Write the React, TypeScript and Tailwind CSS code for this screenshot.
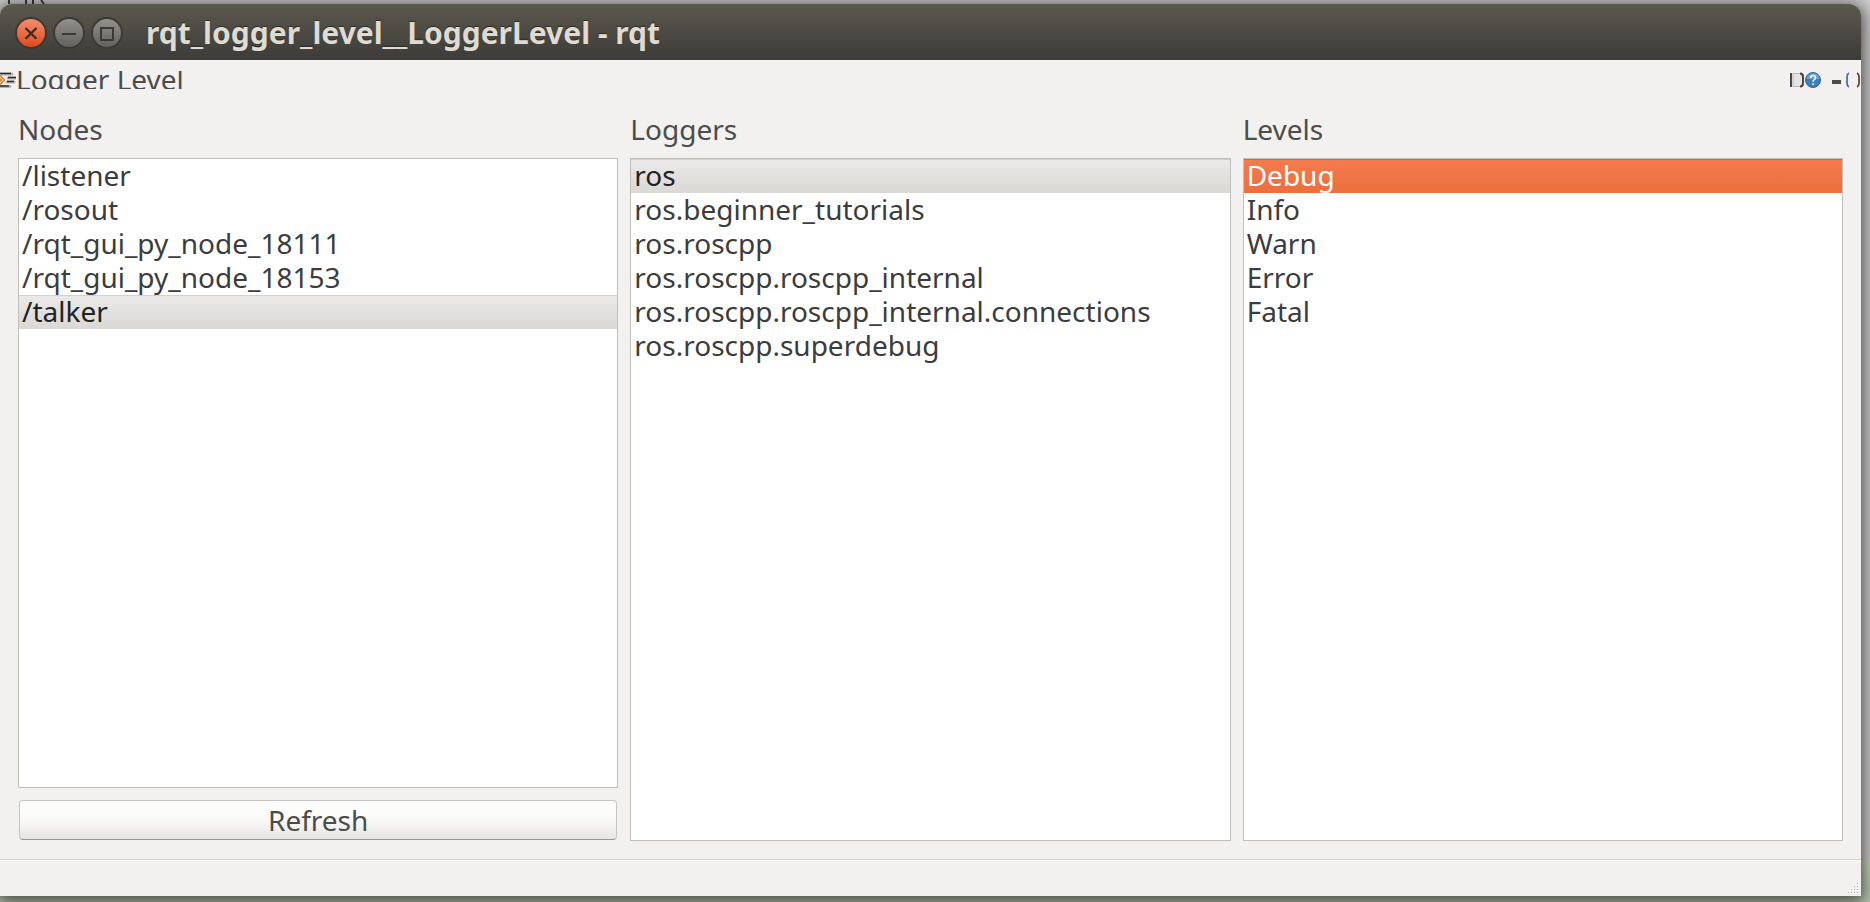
import { useState } from "react";

type PanelProps = {
  title: string;
  items: string[];
  initial: string;
  accent?: boolean;
  children?: React.ReactNode;
};

function ListPanel({ title, items, initial, accent = false, children }: PanelProps) {
  const [selected, setSelected] = useState(initial);
  const active = accent
    ? "bg-linear-to-b from-[#f47c4f] to-[#ec6f3d] text-white shadow-[inset_0_1px_#d96a3c]"
    : "bg-linear-to-b from-[#ebeae9] to-[#dad8d5] text-[#222222] shadow-[inset_0_1px_#d2d1cf]";
  return (
    <section aria-label={title} className="flex min-w-0 flex-1 flex-col">
      <h2 className="pb-3 leading-[34px]">{title}</h2>
      <ul className="flex-1 overflow-hidden border border-[#c0bfbc] bg-white text-[#3c3c3c]">
        {items.map((item) => (
          <li key={item}>
            <button
              type="button"
              aria-pressed={item === selected}
              onClick={() => setSelected(item)}
              className={`block w-full px-[3px] pb-[2px] text-left leading-8 whitespace-nowrap ${
                item === selected ? active : ""
              }`}
            >
              {item}
            </button>
          </li>
        ))}
      </ul>
      {children}
    </section>
  );
}

function WindowControls() {
  return (
    <div className="flex gap-[6px]">
      <button
        type="button"
        aria-label="Close"
        className="size-8 rounded-full border-2 border-[#3b3935] bg-linear-to-b from-[#f68d6c] to-[#dd4814]"
      >
        <svg viewBox="0 0 28 28" className="size-7" fill="none" stroke="#3b2a22" strokeWidth="2.4">
          <path d="M8.500 10l11 11M19.500 10l-11 11" stroke="#f6906e" strokeWidth="1.500" />
          <path d="M8.500 9l11 11M19.500 9l-11 11" />
        </svg>
      </button>
      <button
        type="button"
        aria-label="Minimize"
        className="size-8 rounded-full border-2 border-[#3b3935] bg-linear-to-b from-[#92918b] to-[#62615b]"
      >
        <svg viewBox="0 0 28 28" className="size-7" fill="none" stroke="#3b3935" strokeWidth="2">
          <path d="M7 15h14" />
        </svg>
      </button>
      <button
        type="button"
        aria-label="Maximize"
        className="size-8 rounded-full border-2 border-[#3b3935] bg-linear-to-b from-[#92918b] to-[#62615b]"
      >
        <svg viewBox="0 0 28 28" className="size-7" fill="none" stroke="#3b3935" strokeWidth="2">
          <rect x="8" y="9" width="12" height="12" />
        </svg>
      </button>
    </div>
  );
}

function DockIcon() {
  return (
    <svg viewBox="0 0 16 16" className="size-4 shrink-0" fill="none" aria-hidden="true">
      <path d="M0 2h12M8 6h8M7 10h7M0 14.500h10" stroke="#b5b5b5" strokeWidth="3" strokeLinecap="round" />
      <path d="M0 1.500h11M8 5.500h8M7 9.500h7M0 14h9" stroke="#2f2f2f" strokeWidth="1.600" />
      <path d="M0 3.500L4.500 8 0 12.500M0 6.500L1.500 8 0 9.500" stroke="#e07b1a" strokeWidth="1.500" />
    </svg>
  );
}

function DockButtons() {
  return (
    <div className="flex h-4 items-center">
      <button type="button" aria-label="Configuration">
        <svg viewBox="0 0 15 16" className="h-4 w-[15px]">
          <path d="M3 1.500h7l3 4v9H3z" fill="#e6e4e1" stroke="#b9b7b3" />
          <path d="M1 1v14" stroke="#45474f" strokeWidth="2" fill="none" />
          <path d="M10 1.500q3 0 3 3v7q0 3-3 3" stroke="#4d4640" strokeWidth="2" fill="none" />
        </svg>
      </button>
      <button type="button" aria-label="Help">
        <svg viewBox="0 0 16 16" className="size-4">
          <circle cx="8" cy="8" r="7.500" fill="#3d7fb9" stroke="#2c6397" />
          <path d="M1.500 7a6.500 6 0 0 1 13 0z" fill="#6a9dca" />
          <path d="M5.600 6.200q0-2.600 2.500-2.600t2.500 2.200q0 1.200-1.300 1.900T8.100 9.800M8.100 11.300v1.700" stroke="#fff" strokeWidth="1.500" fill="none" />
        </svg>
      </button>
      <button type="button" aria-label="Minimize panel" className="ml-[11px]">
        <svg viewBox="0 0 10 16" className="h-4 w-[10px]">
          <path d="M0 10h9" stroke="#4a4a4a" strokeWidth="4" />
        </svg>
      </button>
      <button type="button" aria-label="Close panel" className="ml-1">
        <svg viewBox="0 0 14 16" className="h-4 w-[14px]" fill="none" strokeWidth="1.800">
          <path d="M3 1q-2 1-2 4v6q0 3 2 4" stroke="#4d6f9a" />
          <path d="M11 1q2 1 2 4v6q0 3-2 4" stroke="#6a4a30" />
        </svg>
      </button>
    </div>
  );
}

const gripDots = [
  [9, 0], [6, 3], [9, 3], [3, 6], [6, 6], [9, 6], [0, 9], [3, 9], [6, 9], [9, 9],
];

export default function App() {
  return (
    <div className="relative flex min-h-screen flex-col bg-linear-to-b from-[#cdcdcd] from-95% via-[#c5d6b4] via-96% to-[#b9c4b0] pt-1 pr-[9px] pb-[6px] font-['Noto_Sans',sans-serif] text-[28px] text-[#4c4c4c]">
      <main className="flex flex-1 flex-col rounded-t-xl bg-[#f2f1ef] shadow-[0_3px_16px_3px_#000000a0]">
        <header className="flex h-14 items-center gap-[23px] rounded-t-xl border-t border-[#5a574c] bg-linear-to-b from-[#5b584d] to-[#3d3c38] pl-[15px]">
          <WindowControls />
          <h1 className="truncate text-[30px] font-bold text-[#dfdbd2] [text-shadow:0_-1px_1px_#2c2b28]">
            rqt_logger_level__LoggerLevel - rqt
          </h1>
        </header>
        <div className="flex h-10 items-center justify-between pr-px">
          <div className="flex items-center">
            <DockIcon />
            <span className="h-[18px] overflow-hidden leading-4">Logger Level</span>
          </div>
          <DockButtons />
        </div>
        <div className="flex flex-1 gap-3 px-[18px] pt-3 pb-[18px]">
          <ListPanel
            title="Nodes"
            items={["/listener", "/rosout", "/rqt_gui_py_node_18111", "/rqt_gui_py_node_18153", "/talker"]}
            initial="/talker"
          >
            <button
              type="button"
              className="mx-px mt-3 mb-px h-10 rounded-[4px] border border-[#c6c5c3] border-b-[#989795] bg-linear-to-b from-white via-[#f9f9f8] to-[#e7e5e3] leading-[38px]"
            >
              Refresh
            </button>
          </ListPanel>
          <ListPanel
            title="Loggers"
            items={[
              "ros",
              "ros.beginner_tutorials",
              "ros.roscpp",
              "ros.roscpp.roscpp_internal",
              "ros.roscpp.roscpp_internal.connections",
              "ros.roscpp.superdebug",
            ]}
            initial="ros"
          />
          <ListPanel title="Levels" items={["Debug", "Info", "Warn", "Error", "Fatal"]} initial="Debug" accent />
        </div>
        <footer className="flex h-[37px] items-end justify-end border-t border-[#d3d2d0] pr-[2px] pb-[2px] shadow-[inset_0_1px_#ffffff]">
          <svg viewBox="0 0 11 11" className="size-[11px]" fill="#b5b4b1" aria-hidden="true">
            {gripDots.map(([x, y]) => (
              <rect key={`${x}-${y}`} x={x} y={y} width="1" height="1" />
            ))}
          </svg>
        </footer>
      </main>
      <svg viewBox="0 0 48 4" className="absolute top-0 left-0 h-1 w-12" stroke="#2b2b33" strokeWidth="2" aria-hidden="true">
        <path d="M9 0v4M26 0v4M33 0v4M41 0l3 4" />
      </svg>
    </div>
  );
}
